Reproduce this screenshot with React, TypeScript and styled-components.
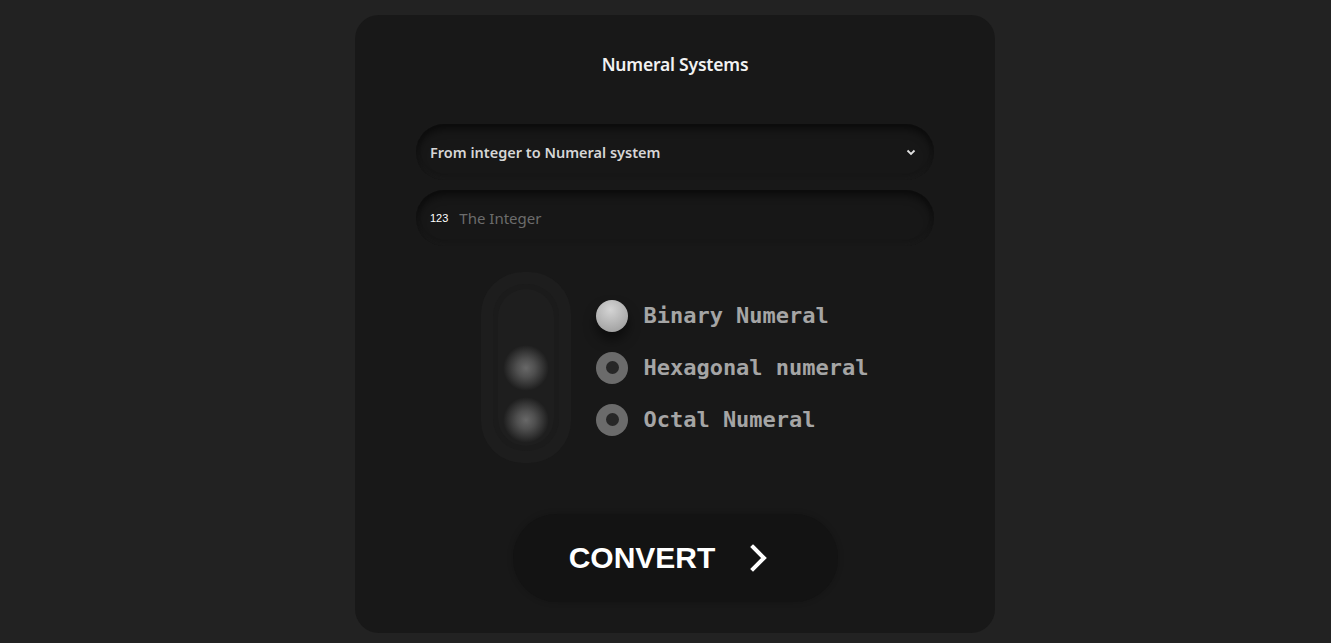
import React from "react";
import styled, { createGlobalStyle } from "styled-components";

const Global = createGlobalStyle`
  html, body { margin: 0; padding: 0; background: #222222; }
  body { font-family: "Noto Sans", "DejaVu Sans", sans-serif; }
  * { box-sizing: border-box; }
`;

const Page = styled.div`
  display: flex;
  justify-content: center;
  padding: 15px 0 10px 19px;
  min-height: 643px;
`;

const Card = styled.div`
  width: 640px;
  height: 618px;
  background: #181818;
  border-radius: 24px;
  padding: 37px 0 31px;
  display: flex;
  flex-direction: column;
  align-items: center;
`;

const Title = styled.h1`
  margin: 0;
  font-family: "Noto Sans", sans-serif;
  font-weight: 600;
  font-size: 17.5px;
  line-height: 24px;
  color: #f2f2f2;
  letter-spacing: -0.2px;
`;

const Field = styled.div<{ $top: number }>`
  width: 518px;
  height: 56px;
  margin-top: ${(p) => p.$top}px;
  border-radius: 28px;
  background: #171717;
  box-shadow: inset 0 5px 8px rgba(0, 0, 0, 0.55), inset 0 -2px 4px rgba(40, 40, 40, 0.25);
  display: flex;
  align-items: center;
  padding: 0 14px;
`;

const SelectText = styled.span`
  flex: 1;
  font-size: 14.5px;
  font-weight: 600;
  color: #d6d6d6;
`;

const Prefix = styled.span`
  font-family: "Liberation Sans", Arial, sans-serif;
  font-size: 11px;
  color: #ffffff;
  margin-right: 11px;
`;

const Placeholder = styled.span`
  font-size: 15px;
  color: #6c6c6c;
`;

const Options = styled.div`
  margin-top: 26px;
  display: flex;
  align-items: center;
  gap: 25px;
`;

const TrackOuter = styled.div`
  width: 90px;
  height: 191px;
  border-radius: 42px;
  background: #1d1d1d;
  padding: 12px;
`;

const TrackMid = styled.div`
  width: 100%;
  height: 100%;
  border-radius: 32px;
  background: #1b1b1b;
  padding: 5px;
`;

const TrackInner = styled.div`
  width: 100%;
  height: 100%;
  border-radius: 28px;
  background: #1e1e1e;
  display: flex;
  flex-direction: column;
  justify-content: center;
`;

const Slot = styled.div`
  height: 52px;
  display: flex;
  align-items: center;
  justify-content: center;
`;

const Glow = styled.div<{ $on: boolean }>`
  width: 46px;
  height: 46px;
  flex-shrink: 0;
  border-radius: 50%;
  background: ${(p) =>
    p.$on
      ? "radial-gradient(circle, rgba(104,104,104,1) 0%, rgba(92,92,92,0.8) 28%, rgba(40,40,40,0) 70%)"
      : "transparent"};
`;

const RadioList = styled.div`
  display: flex;
  flex-direction: column;
`;

const Row = styled.label`
  height: 52px;
  display: flex;
  align-items: center;
  gap: 15px;
`;

const Dot = styled.span<{ $checked: boolean }>`
  width: 32px;
  height: 32px;
  border-radius: 50%;
  display: flex;
  align-items: center;
  justify-content: center;
  background: ${(p) =>
    p.$checked ? "radial-gradient(circle at 45% 30%, #d4d4d4 0%, #b8b8b8 45%, #959595 100%)" : "#6b6b6b"};
  box-shadow: ${(p) => (p.$checked ? "0 8px 12px rgba(0,0,0,0.5)" : "none")};
  &::after {
    content: "";
    display: ${(p) => (p.$checked ? "none" : "block")};
    width: 13px;
    height: 13px;
    border-radius: 50%;
    background: #272727;
  }
`;

const Label = styled.span`
  font-family: "DejaVu Sans Mono", "Liberation Mono", monospace;
  font-weight: 700;
  font-size: 22px;
  color: #a5a5a5;
`;

const Button = styled.button`
  margin-top: 51px;
  width: 325px;
  height: 88px;
  border: none;
  border-radius: 44px;
  background: #131313;
  box-shadow: 0 0 6px rgba(0, 0, 0, 0.2);
  display: flex;
  align-items: center;
  justify-content: center;
  gap: 34px;
  padding: 0 12px 0 0;
  cursor: pointer;
`;

const ButtonText = styled.span`
  font-family: "Liberation Sans", Arial, sans-serif;
  font-weight: 700;
  font-size: 30px;
  color: #ffffff;
`;

const options = [
  { label: "Binary Numeral", checked: true },
  { label: "Hexagonal numeral", checked: false },
  { label: "Octal Numeral", checked: false },
];

export default function App() {
  return (
    <>
      <Global />
      <Page>
        <Card>
          <Title>Numeral Systems</Title>
          <Field $top={48}>
            <SelectText>From integer to Numeral system</SelectText>
            <svg width="10" height="7" viewBox="0 0 10 7" style={{ marginRight: 4 }}>
              <path d="M1.5 1.5 L5 5 L8.5 1.5" stroke="#e0e0e0" strokeWidth="1.8" fill="none" />
            </svg>
          </Field>
          <Field $top={10}>
            <Prefix>123</Prefix>
            <Placeholder>The Integer</Placeholder>
          </Field>
          <Options>
            <TrackOuter>
              <TrackMid>
                <TrackInner>
                  {options.map((o) => (
                    <Slot key={o.label}>
                      <Glow $on={!o.checked} />
                    </Slot>
                  ))}
                </TrackInner>
              </TrackMid>
            </TrackOuter>
            <RadioList>
              {options.map((o) => (
                <Row key={o.label}>
                  <Dot $checked={o.checked} />
                  <Label>{o.label}</Label>
                </Row>
              ))}
            </RadioList>
          </Options>
          <Button>
            <ButtonText>CONVERT</ButtonText>
            <svg width="20" height="28" viewBox="0 0 20 28">
              <path d="M4 3 L15 14 L4 25" stroke="#ffffff" strokeWidth="4" fill="none" strokeLinecap="square" />
            </svg>
          </Button>
        </Card>
      </Page>
    </>
  );
}
